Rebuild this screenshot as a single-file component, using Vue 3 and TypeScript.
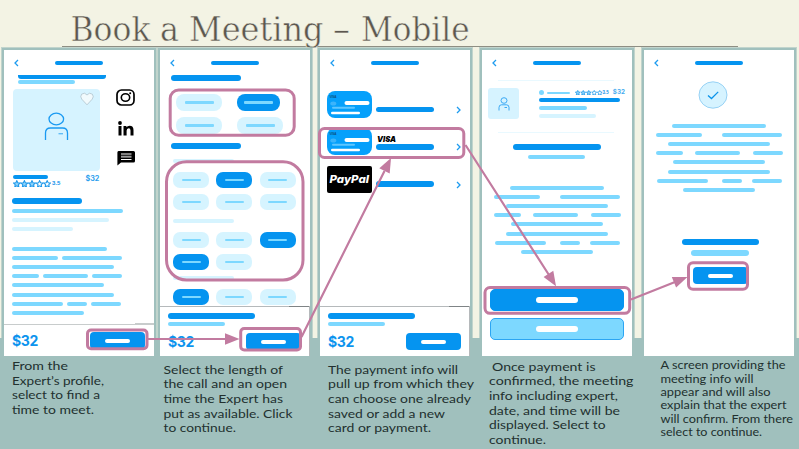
<script setup lang="ts">
import { h, type FunctionalComponent } from 'vue'

type Tone = 'dark' | 'light' | 'pale'
/** A bar: gap before it, width, tone. */
type Bar = [number, number, Tone?]
interface Row { t: number; h?: number; bars: Bar[] }

const Lines: FunctionalComponent<{ rows: Row[] }> = (props) =>
  h('div', { class: 'wf-lines' }, props.rows.map((r) =>
    h('div', { class: 'wf-row', style: { marginTop: `${r.t}px`, height: `${r.h ?? 4}px` } },
      r.bars.map(([gap, w, tone]) =>
        h('i', { class: ['wf-bar', tone ?? 'light'], style: { marginLeft: `${gap}px`, width: `${w}px` } })))))
Lines.props = ['rows']

const Chevron: FunctionalComponent<{ dir: 'left' | 'right' }> = (props) =>
  h('svg', { class: 'wf-chevron', width: 5, height: 8, viewBox: '0 0 5 8' }, [
    h('path', { d: props.dir === 'right' ? 'M1 1l3 3-3 3' : 'M4 1L1 4l3 3', fill: 'none', stroke: '#1d9bef', 'stroke-width': 1.3 }),
  ])
Chevron.props = ['dir']

const Stars: FunctionalComponent<{ size: number }> = (props) =>
  h('svg', { class: 'wf-stars', width: props.size * 5, height: props.size, viewBox: '0 0 50 10' },
    [0, 1, 2, 3, 4].map((i) =>
      h('path', {
        transform: `translate(${i * 10} 0)`,
        d: 'M5 .8L6.3 3.6 9.4 4 7.1 6.1 7.7 9.2 5 7.7 2.3 9.2 2.9 6.1 .6 4 3.7 3.6Z',
        fill: i < 3 ? '#8fd4fb' : '#fff',
        stroke: '#1d98ea',
        'stroke-width': 1.4,
      })))
Stars.props = ['size']

const titleWords: [string, number, number][] = [
  ['Book', 8.5, 80], ['a', 98, 19], ['Meeting', 127, 134.5], ['–', 271, 17], ['Mobile', 299, 108.5],
]

const profileTop: Row[] = [
  { t: 5, bars: [[14, 88, 'dark']] },
  { t: 1, bars: [[14, 57]] },
]
const profileText: Row[] = [
  { t: 10, h: 6, bars: [[8, 70, 'dark']] },
  { t: 5, bars: [[8, 111]] },
  { t: 5, bars: [[8, 97, 'pale']] },
  { t: 5, bars: [[8, 61, 'pale']] },
  { t: 16, bars: [[8, 95]] },
  { t: 5, bars: [[8, 46], [4, 60]] },
  { t: 5, bars: [[8, 102]] },
  { t: 5, bars: [[8, 27], [4, 45], [4, 30]] },
  { t: 5, bars: [[8, 92]] },
  { t: 6, bars: [[8, 102]] },
  { t: 5, bars: [[8, 51], [4, 20], [4, 30]] },
  { t: 5, bars: [[8, 72]] },
]
const paragraph: Row[] = [
  { t: 0, bars: [[28, 94]] },
  { t: 5, bars: [[12, 46], [20, 60]] },
  { t: 5, bars: [[24, 102]] },
  { t: 5, bars: [[12, 27], [12, 45], [13, 30]] },
  { t: 5, bars: [[29, 92]] },
  { t: 6, bars: [[24, 102]] },
  { t: 5, bars: [[13, 51], [14, 20], [10, 30]] },
  { t: 5, bars: [[39, 72]] },
]
const summary: Row[] = [
  { t: 0, h: 6, bars: [[8, 87, 'dark']] },
  { t: 3, bars: [[8, 57]] },
]
const durations: boolean[][] = [[false, true], [false, false]]
const slotsA: boolean[][] = [[false, true, false], [false, false, false]]
const slotsB: boolean[][] = [[false, false, true], [true, false]]
const slotsC: boolean[][] = [[true, false, false]]

interface CaptionLine { s: string; x: number; y: number; w: number }
interface Caption { size: number; lines: CaptionLine[] }
const cap = (size: number, x: number, rows: [string, number, number, number?][]): Caption => ({
  size, lines: rows.map(([s, y, w, dx]) => ({ s, x: x + (dx ?? 0), y: y - 0.5, w })),
})
const captions: Caption[] = [
  cap(12.3, 10, [['From the', 13, 56], ['Expert’s profile,', 28, 92], ['select to find a', 42, 88], ['time to meet.', 57, 82]]),
  cap(12.3, 5.5, [['Select the length of', 17, 119.5], ['the call and an open', 31.5, 123.5], ['time the Expert has', 46, 119.5], ['put as available. Click', 61, 129], ['to continue.', 75, 72.5]]),
  cap(12.3, 10, [['The payment info will', 17, 130], ['pull up from which they', 31.5, 146], ['can choose one already', 46, 143], ['saved or add a new', 61, 117], ['card or payment.', 75, 103]]),
  cap(12.3, 9, [['Once payment is', 14, 103.5, 3], ['confirmed, the meeting', 28.5, 144.5], ['info including expert,', 43, 129], ['date, and time will be', 58, 131], ['displayed. Select to', 72, 116.5], ['continue.', 87, 57]]),
  cap(11.3, 18.5, [['A screen providing the', 12, 125], ['meeting info will', 26, 93], ['appear and will also', 39, 110], ['explain that the expert', 52, 126], ['will confirm. From there', 66, 132.5], ['select to continue.', 79, 101.5]]),
]
</script>

<template>
  <main class="slide">
    <header class="heading">
      <svg class="title" width="676" height="46" viewBox="0 0 676 46">
        <text v-for="[word, x, w] in titleWords" :key="word" :x="x" y="40.5" :textLength="w" lengthAdjust="spacingAndGlyphs">{{ word }}</text>
      </svg>
    </header>

    <div class="board">
      <section class="step">
        <div class="phone">
          <div class="bar-top"><Chevron dir="left" /><i class="wf-bar dark"></i></div>
          <Lines class="cut" :rows="profileTop" />
          <div class="hero">
            <div class="portrait">
              <svg width="25" height="29" viewBox="0 0 25 29" fill="none" stroke="#1a9af2" stroke-width="1.3">
                <ellipse cx="12.3" cy="7" rx="7.3" ry="5.8" />
                <path d="M1.5 28v-7q0-5 5-5h12q5 0 5 5v7" />
                <path d="M14.500 21.700h4.500" stroke="#5bb9f6" />
              </svg>
              <svg class="heart" width="14" height="14" viewBox="0 0 14 14">
                <path d="M7 12.8L1.8 7.2Q-.2 4.600 1.600 2.200 4.700-.2 7 3 9.300-.2 12.400 2.200 14.200 4.600 12.200 7.200Z" fill="#f1fafd" stroke="#a9bcc6" stroke-width=".7" />
              </svg>
            </div>
            <div class="social">
              <svg width="19" height="17" viewBox="0 0 19 17" fill="none" stroke="#000">
                <rect x="1" y="1" width="17" height="15" rx="4.500" stroke-width="1.700" />
                <ellipse cx="9.500" cy="8.500" rx="4.200" ry="3.800" stroke-width="1.600" />
                <circle cx="14.200" cy="4.300" r="1" fill="#000" stroke="none" />
              </svg>
              <svg width="16" height="15" viewBox="0 0 16 15">
                <circle cx="2" cy="2" r="1.900" />
                <path d="M.5 5h3v9.500h-3zM5.500 5h2.900v1.300Q9.400 4.700 11.600 4.700q3.900 0 3.900 4.300v5.500h-3V9.600q0-2.300-1.800-2.300-2.100 0-2.100 2.500v4.700h-3.100z" />
              </svg>
              <svg width="18" height="15" viewBox="0 0 18 15">
                <path d="M1.500 0h15q1.500 0 1.500 1.500v8.500q0 1.500-1.500 1.500H4L.4 14.500V1.500Q.4 0 1.500 0z" />
                <path d="M4 3h10.500M4 8.500h10.500" stroke="#fff" stroke-width="1" />
                <path d="M4 5.700h10.500" stroke="#999" stroke-width="2" />
              </svg>
            </div>
          </div>
          <div class="meta">
            <div class="score">
              <i class="wf-bar dark"></i>
              <div class="rating"><Stars :size="7.6" /><span>3.5</span></div>
            </div>
            <span class="fee">$32</span>
          </div>
          <Lines :rows="profileText" />
          <footer class="checkout short">
            <div class="pay"><b>$32</b><span class="btn"><i></i></span></div>
          </footer>
        </div>
      </section>

      <section class="step">
        <div class="phone">
          <div class="bar-top"><Chevron dir="left" /><i class="wf-bar dark"></i></div>
          <Lines :rows="[{ t: 5, h: 6, bars: [[11, 70, 'dark']] }]" />
          <div class="pills wide">
            <div v-for="(r, i) in durations" :key="i" class="pill-row">
              <span v-for="(on, j) in r" :key="j" class="pill" :class="{ on }"><i></i></span>
            </div>
          </div>
          <Lines :rows="[{ t: 9, h: 6, bars: [[11, 70, 'dark']] }, { t: 10, bars: [[13, 61, 'pale']] }]" />
          <div class="pills">
            <div v-for="(r, i) in slotsA" :key="i" class="pill-row">
              <span v-for="(on, j) in r" :key="j" class="pill" :class="{ on }"><i></i></span>
            </div>
          </div>
          <Lines :rows="[{ t: 9, bars: [[13, 61, 'pale']] }]" />
          <div class="pills">
            <div v-for="(r, i) in slotsB" :key="i" class="pill-row">
              <span v-for="(on, j) in r" :key="j" class="pill" :class="{ on }"><i></i></span>
            </div>
          </div>
          <Lines :rows="[{ t: 6, bars: [[13, 61, 'pale']] }]" />
          <div class="pills">
            <div v-for="(r, i) in slotsC" :key="i" class="pill-row">
              <span v-for="(on, j) in r" :key="j" class="pill" :class="{ on }"><i></i></span>
            </div>
          </div>
          <footer class="checkout edge">
            <Lines :rows="summary" />
            <div class="pay"><b>$32</b><span class="btn"><i></i></span></div>
          </footer>
        </div>
      </section>

      <section class="step">
        <div class="phone">
          <div class="bar-top"><Chevron dir="left" /><i class="wf-bar dark"></i></div>
          <div class="methods">
            <div v-for="n in 3" :key="n" class="method">
              <div v-if="n < 3" class="card">
                <svg width="45" height="27" viewBox="0 0 45 27">
                  <text x="2.500" y="7.200" font-size="3.500" textLength="7" lengthAdjust="spacingAndGlyphs">VISA</text>
                  <ellipse cx="6.300" cy="12.500" rx="3" ry="2.100" fill="#3cb4fb" />
                  <rect x="17.500" y="10" width="25" height="4" rx="2" fill="#fff" />
                  <rect x="5" y="15.700" width="23" height="2" rx="1" fill="#5fc6ff" />
                  <rect x="4" y="20.700" width="29" height="2.600" rx="1.300" fill="#fff" />
                </svg>
              </div>
              <div v-else class="paypal">
                <svg width="45" height="27" viewBox="0 0 45 27">
                  <text x="2.500" y="16.800" textLength="39.500" lengthAdjust="spacingAndGlyphs">PayPal</text>
                </svg>
              </div>
              <div class="label">
                <svg v-if="n === 2" class="visa" width="24" height="13" viewBox="0 0 24 13">
                  <text x="1" y="9.700" textLength="19" lengthAdjust="spacingAndGlyphs">VISA</text>
                </svg>
                <i class="wf-bar dark"></i>
              </div>
              <Chevron dir="right" />
            </div>
          </div>
          <footer class="checkout edge">
            <Lines :rows="summary" />
            <div class="pay"><b>$32</b><span class="btn"><i></i></span></div>
          </footer>
        </div>
      </section>

      <section class="step">
        <div class="phone">
          <div class="bar-top"><Chevron dir="left" /><i class="wf-bar dark"></i></div>
          <div class="expert">
            <div class="thumb">
              <svg width="12" height="14" viewBox="0 0 12 14" fill="none" stroke="#2ba2f3" stroke-width=".9">
                <ellipse cx="6" cy="3.500" rx="3" ry="2.800" />
                <path d="M1 13.500V10.500Q1 7.800 3.500 7.800h5q2.500 0 2.500 2.700v3M6.500 10.500h2.500" />
              </svg>
            </div>
            <div class="bio">
              <div class="bio-head">
                <i class="dot"></i><i class="wf-bar light"></i><Stars :size="5.5" /><small>3.5</small><em>$32</em>
              </div>
              <Lines :rows="[{ t: 2, bars: [[0, 81, 'dark']] }, { t: 4, bars: [[0, 48]] }, { t: 4, bars: [[0, 57, 'pale']] }]" />
            </div>
          </div>
          <Lines :rows="[{ t: 11, h: 6, bars: [[31, 88, 'dark']] }, { t: 5, bars: [[46, 57]] }]" />
          <Lines class="para-four" :rows="paragraph" />
          <div class="actions">
            <span class="action primary"><i></i></span>
            <span class="action"><i></i></span>
          </div>
        </div>
      </section>

      <section class="step">
        <div class="phone">
          <div class="bar-top"><Chevron dir="left" /><i class="wf-bar dark"></i></div>
          <div class="done">
            <svg width="30" height="30" viewBox="0 0 30 30">
              <ellipse cx="15" cy="15" rx="14" ry="13.200" fill="#d6f3ff" stroke="#8fcdf3" stroke-width=".9" />
              <path d="M10 15.400l3.500 3.100 6.700-6.600" fill="none" stroke="#0b93ea" stroke-width="1.300" />
            </svg>
          </div>
          <Lines class="para-five" :rows="paragraph" />
          <Lines :rows="[{ t: 47, h: 6, bars: [[38, 77, 'dark']] }, { t: 5, h: 6, bars: [[47, 58]] }]" />
          <div class="finish"><span class="btn"><i></i></span></div>
        </div>
      </section>
    </div>

    <div class="captions">
      <svg v-for="(c, i) in captions" :key="i" width="154" height="93" :viewBox="'0 0 154 93'" :font-size="c.size">
        <text v-for="l in c.lines" :key="l.s" :x="l.x" :y="l.y" :textLength="l.w" lengthAdjust="spacingAndGlyphs">{{ l.s }}</text>
      </svg>
    </div>

    <svg class="flow" width="799" height="449" viewBox="0 0 799 449">
      <g fill="none" stroke="#c27ba0" stroke-width="3">
        <rect x="87.500" y="330" width="59.500" height="18.800" rx="3.500" />
        <rect x="170.200" y="90" width="124" height="45.300" rx="8.500" />
        <rect x="166.500" y="161.800" width="136.500" height="118.200" rx="20" />
        <rect x="240.700" y="328.500" width="59.800" height="21.500" rx="3.500" />
        <rect x="319.500" y="128.500" width="144.300" height="29" rx="5" />
        <rect x="485" y="287.500" width="144.700" height="25.800" rx="5" />
        <rect x="688.500" y="262.800" width="59" height="26.500" rx="4.500" />
      </g>
      <g stroke="#c27ba0" stroke-width="2.200">
        <path d="M148 339H227M301.500 337L384.500 171M465.500 145L549 275M631 299.500L675 282" />
      </g>
      <g fill="#c27ba0">
        <path d="M239.500 339L225 333.200V344.800Z" />
        <path d="M391 158L379.300 168.300 389.700 173.500Z" />
        <path d="M556 286.200L543.600 276.900 553.300 270.700Z" />
        <path d="M687.500 277L671.800 276.900 676.100 287.600Z" />
      </g>
    </svg>
  </main>
</template>

<style>
body { margin: 0; }
.wf-row { display: flex; }
.wf-bar { display: block; flex: none; height: 100%; border-radius: 3px; }
.wf-bar.dark { background: #0594f0; }
.wf-bar.light { background: #7dd8ff; }
.wf-bar.pale { background: #d6f4ff; }
.wf-chevron, .wf-stars { display: block; flex: none; }
</style>

<style scoped>
.slide {
  position: relative;
  width: 799px;
  height: 449px;
  overflow: hidden;
  background: linear-gradient(#f3f3e4 338px, #a0c0bd 338px);
  font-family: "Liberation Sans", sans-serif;
}
.slide svg { display: block; flex: none; }
.heading { height: 46px; margin: 0 61px 0 62px; border-bottom: 1px solid #8e8e83; }
.title { overflow: visible; font-family: "DejaVu Serif", serif; font-size: 33px; fill: #5c574f; stroke: #f3f3e4; stroke-width: .5px; }
.board { display: grid; grid-template-columns: 154px 154px 154px 154px 154px; height: 308px; padding: 1px 0 0 2px; }
.step { width: 154px; }
.step:nth-child(2) { margin-left: 2px; }
.step:nth-child(3) { margin-left: 8px; }
.step:nth-child(4) { margin-left: 16px; }
.step:nth-child(5) { margin-left: 24px; }
.phone {
  display: flex;
  flex-direction: column;
  box-sizing: border-box;
  width: 154px;
  height: 308px;
  border: 2px solid #a0c0bd;
  border-bottom: 0;
  background: #fff;
  box-shadow: 0 0 0 1px rgba(160, 192, 189, .6);
}
.bar-top { display: flex; align-items: center; height: 20px; padding: 3px 0 0 10px; box-sizing: border-box; margin-top: 1px; margin-bottom: -1px; }
.bar-top .wf-bar { width: 48px; height: 4px; margin-left: 36px; }
.cut :deep(.wf-row:first-child .wf-bar) { border-radius: 0 0 3px 3px; }

.hero { display: flex; margin: 5px 0 0 9px; }
.portrait { position: relative; display: flex; justify-content: center; width: 87px; height: 82px; box-sizing: border-box; padding-top: 23px; border-radius: 4px; background: #d6f3ff; }
.heart { position: absolute; top: 3px; right: 6px; }
.social { display: flex; flex-direction: column; align-items: center; gap: 15px; margin-left: 16px; }
.meta { display: flex; height: 17px; padding-left: 9px; }
.score { width: 72.500px; padding-top: 4px; }
.score .wf-bar { width: 35px; height: 4px; }
.rating { display: flex; margin-top: .5px; font-size: 6px; font-weight: 700; line-height: 7px; color: #1292ea; }
.rating span { margin-left: 1px; }
.fee { padding-top: 3px; font: 700 7.200px/9px "Inter", sans-serif; color: #2c9fee; }

.checkout { display: flex; flex-direction: column; height: 50px; box-sizing: border-box; margin-top: auto; padding-top: 6px; border-top: 1px solid #b5b9bb; background: #fff; }
.checkout::before { content: ""; align-self: flex-end; flex: none; width: 20px; height: 1px; margin: -7px 0 6px; background: #7f8486; }
.checkout.edge { border-right: 1px solid #b5b9bb; }
.checkout.short { height: 32px; padding-top: 0; border-top-color: #c8cccc; }
.checkout.short::before { width: 19px; margin: -2px 0 1px; background: #c8cccc; }
.pay { display: flex; justify-content: space-between; margin-top: auto; padding: 0 9px 6px 8px; }
.edge .pay { padding: 0 8px 6px 8px; }
.short .pay { padding-bottom: 7px; }
.pay b { font: 700 14px/17px "Inter", sans-serif; letter-spacing: -.4px; color: #0d94ee; }
.btn { display: flex; align-items: center; justify-content: center; width: 55px; height: 17px; border-radius: 4px; background: #0594f0; }
.btn i { width: 25px; height: 4px; border-radius: 2px; background: #fff; }

.pills { display: flex; flex-direction: column; gap: 6px; margin: 9px 0 0 13px; }
.pills.wide { margin: 13px 0 0 16px; }
.pill-row { display: grid; grid-template-columns: 36px 36px 36px; column-gap: 7.300px; }
.pill { display: flex; align-items: center; justify-content: center; height: 16px; border-radius: 7px; background: #d6f4ff; }
.pill i { width: 19px; height: 2.500px; border-radius: 1px; background: #7dd8ff; }
.pill.on { background: #0594f0; }
.wide .pill-row { grid-template-columns: 46px 46px; column-gap: 15px; }
.wide .pill { height: 17px; border-radius: 8px; }
.wide .pill.on { width: 43px; }
.wide .pill i { width: 29px; }

.methods { display: flex; flex-direction: column; gap: 10px; padding: 21px 0 0 7px; }
.method { display: flex; height: 27.300px; }
.card { width: 45px; height: 27px; border-radius: 8px; background: #05a0fb; }
.card text { font-weight: 700; fill: #0b4b78; }
.paypal { width: 45px; height: 27px; border-radius: 2px; background: #000; }
.paypal text { font: italic 800 11px "Inter", sans-serif; fill: #fff; }
.label { display: flex; flex-direction: column; justify-content: flex-end; width: 58px; margin: 0 22px 6px 4px; }
.label .wf-bar { height: 5.500px; }
.visa { margin-bottom: -1px; }
.visa text { font: italic 900 8.200px "Inter", sans-serif; }
.method > .wf-chevron { margin-top: 15px; }

.expert { display: flex; gap: 19.500px; height: 51px; margin: 10px 18px 0 16px; border: solid #e9f9ff; border-width: 1.500px 0; }
.thumb { display: flex; flex: none; align-items: center; justify-content: center; width: 31px; height: 31px; margin: 7px 0 0 -10px; padding-top: 1px; box-sizing: border-box; border-radius: 3px; background: #d6f3ff; }
.bio { flex: none; width: 88px; padding-top: 8px; }
.bio-head { display: flex; align-items: center; height: 7px; margin-bottom: 1px; }
.dot { width: 5.500px; height: 5.500px; flex: none; border-radius: 50%; background: #7dd8ff; }
.bio-head .wf-bar { width: 23px; height: 2px; margin: 0 5px 0 3px; }
.bio-head small { font-size: 4.500px; font-weight: 700; color: #1292ea; }
.bio-head em { margin-left: 4px; font: 700 6.300px/7px "Inter", sans-serif; color: #45abef; }
.para-four { padding-top: 27px; }
.actions { display: flex; flex-direction: column; gap: 7px; margin: 35px 0 0 8px; }
.action { display: flex; align-items: center; justify-content: center; box-sizing: border-box; width: 134px; height: 22px; border: 1px solid #2ca5f3; border-radius: 5px; background: #7dd8ff; }
.action.primary { border-color: #0594f0; background: #0594f0; }
.action i { width: 42px; height: 6px; border-radius: 3px; background: #fff; }

.done { display: flex; justify-content: center; padding: 10px 0 0; margin-left: -12px; }
.para-five { padding-top: 14px; }
.finish { padding: 11px 0 0 49px; }

.captions { display: flex; height: 93px; margin: 1px 0 0 2px; }
.captions svg { overflow: visible; font-family: "Lato", sans-serif; fill: #22302f; }
.captions svg:nth-child(2) { margin-left: 2px; }
.captions svg:nth-child(3) { margin-left: 6px; }
.captions svg:nth-child(4) { margin-left: 8px; }
.captions svg:nth-child(5) { margin-left: 8px; }
.flow { position: absolute; inset: 0; }
</style>
